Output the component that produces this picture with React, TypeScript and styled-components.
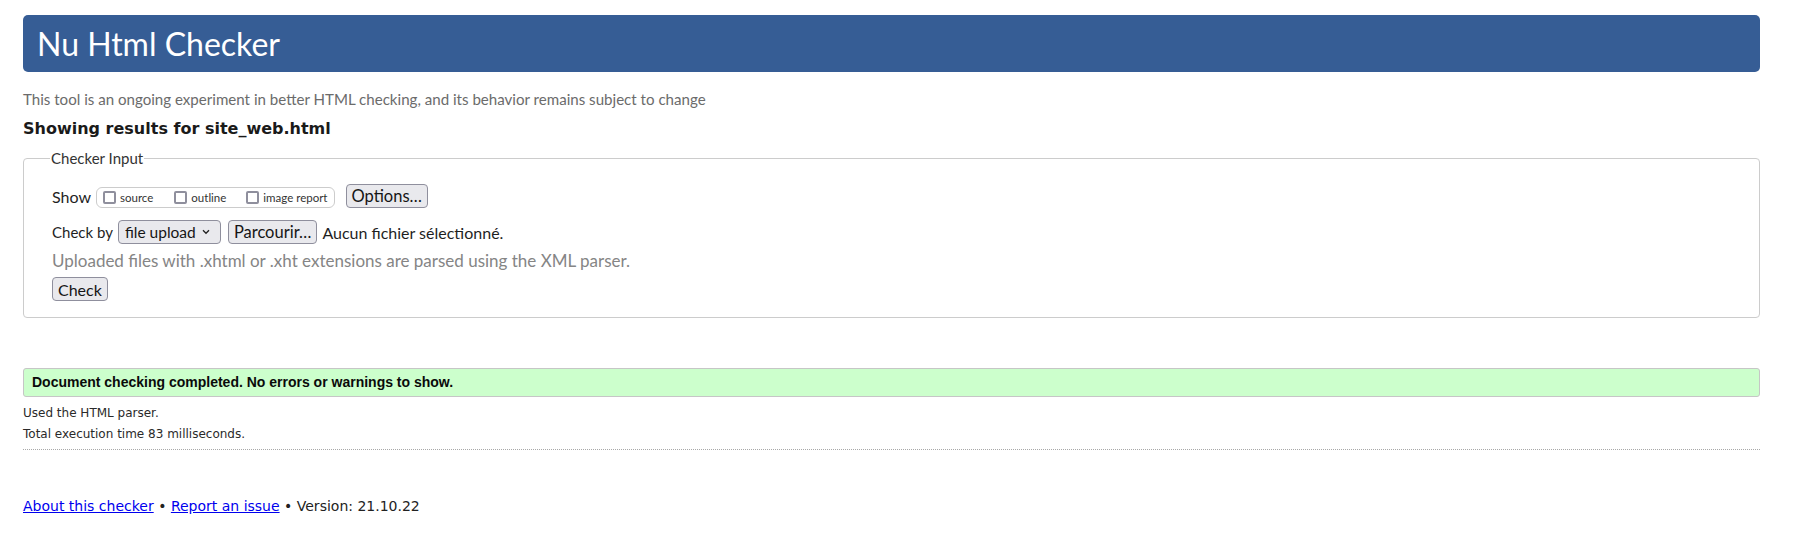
import React from "react";
import styled, { createGlobalStyle } from "styled-components";

const GlobalStyle = createGlobalStyle`
  html, body {
    margin: 0;
    padding: 0;
    background: #ffffff;
  }
  body {
    font-family: "Lato", "Noto Sans", sans-serif;
    color: #222222;
  }
`;

const Page = styled.div`
  padding: 15px 40px 40px 23px;
`;

const Banner = styled.h1`
  margin: 0;
  height: 57px;
  display: flex;
  align-items: center;
  padding: 0 14px;
  background: #365d95;
  color: #ffffff;
  border-radius: 5px;
  font-family: "Lato", "Noto Sans", sans-serif;
  font-weight: 400;
  font-size: 32px;
`;

const Intro = styled.p`
  margin: 17px 0 0;
  font-size: 15.1px;
  line-height: 20px;
  color: #6b6b6b;
`;

const ResultsFor = styled.h2`
  margin: 10px 0 0;
  font-family: "DejaVu Sans", sans-serif;
  font-weight: 700;
  font-size: 16px;
  line-height: 20px;
  color: #1a1a1a;
`;

const Fieldset = styled.fieldset`
  margin: 11px 0 0;
  padding: 17px 28px 16px 28px;
  border: 1px solid #cccccc;
  border-radius: 4px;
  min-width: 0;
`;

const Legend = styled.legend`
  margin-left: -2px;
  padding: 0 1px;
  font-size: 15px;
  line-height: 17px;
  color: #333333;
`;

const Row = styled.div<{ $top?: number }>`
  display: flex;
  align-items: center;
  height: 24px;
  margin-top: ${(p) => p.$top ?? 0}px;
  font-size: 16px;
  color: #1f1f1f;
`;

const Label = styled.span<{ $size?: number }>`
  margin-right: 5px;
  font-size: ${(p) => p.$size ?? 16}px;
`;

const ShowGroup = styled.span`
  display: inline-flex;
  align-items: center;
  height: 19px;
  margin-top: 3px;
  padding: 0 6px 0 6px;
  border: 1px solid #cccccc;
  border-radius: 6px;
  margin-right: 11px;
`;

const CheckItem = styled.label<{ $gap?: number }>`
  display: inline-flex;
  align-items: center;
  margin-right: ${(p) => p.$gap ?? 0}px;
  font-size: 11.5px;
  color: #333333;
`;

const Box = styled.input`
  appearance: none;
  box-sizing: border-box;
  width: 13px;
  height: 13px;
  margin: 0 4px 0 0;
  border: 2px solid #8f8f9d;
  border-radius: 2px;
  background: #ffffff;
`;

const Button = styled.button<{ $size?: number }>`
  box-sizing: border-box;
  height: 24px;
  padding: 0 5px;
  font-family: "Lato", "Noto Sans", sans-serif;
  font-size: ${(p) => p.$size ?? 16.5}px;
  color: #151515;
  background: #e9e9ed;
  border: 1px solid #8f8f9d;
  border-radius: 4px;
`;

const SelectWrap = styled.span`
  position: relative;
  display: inline-flex;
  margin-right: 7px;
`;

const Select = styled.select`
  appearance: none;
  box-sizing: border-box;
  width: 103px;
  height: 24px;
  padding: 0 18px 0 6px;
  font-family: "Lato", "Noto Sans", sans-serif;
  font-size: 15.5px;
  color: #151515;
  background: #e9e9ed;
  border: 1px solid #8f8f9d;
  border-radius: 4px;
`;

const Chevron = styled.svg`
  position: absolute;
  right: 11px;
  top: 9px;
  pointer-events: none;
`;

const FileName = styled.span`
  margin-left: 5px;
`;

const Note = styled.div`
  margin-top: 7px;
  font-size: 17px;
  line-height: 20px;
  color: #858585;
`;

const Success = styled.div`
  margin-top: 50px;
  padding: 0 8px;
  line-height: 27px;
  background: #ccffcc;
  border: 1px solid #c6c6c6;
  border-radius: 3px;
  font-family: "Liberation Sans", Arial, sans-serif;
  font-weight: 700;
  font-size: 14px;
  color: #0a0a0a;
`;

const Details = styled.div`
  margin-top: 6px;
  padding-bottom: 4px;
  border-bottom: 1px dotted #a8a8a8;
  font-family: "DejaVu Sans", sans-serif;
  font-size: 12px;
  line-height: 21px;
  color: #2a2a2a;
`;

const Footer = styled.p`
  margin: 46px 0 0;
  font-family: "DejaVu Sans", sans-serif;
  font-size: 14px;
  line-height: 20px;
  color: #222222;
`;

const Link = styled.a`
  color: #0000ee;
  text-decoration: underline;
`;

export default function App() {
  return (
    <>
      <GlobalStyle />
      <Page>
        <Banner>Nu Html Checker</Banner>
        <Intro>
          This tool is an ongoing experiment in better HTML checking, and its behavior remains
          subject to change
        </Intro>
        <ResultsFor>Showing results for site_web.html</ResultsFor>

        <Fieldset>
          <Legend>Checker Input</Legend>
          <Row>
            <Label>Show</Label>
            <ShowGroup>
              <CheckItem $gap={21}>
                <Box type="checkbox" />
                source
              </CheckItem>
              <CheckItem $gap={20}>
                <Box type="checkbox" />
                outline
              </CheckItem>
              <CheckItem>
                <Box type="checkbox" />
                image report
              </CheckItem>
            </ShowGroup>
            <Button type="button">Options…</Button>
          </Row>
          <Row $top={12}>
            <Label $size={15}>Check by</Label>
            <SelectWrap>
              <Select defaultValue="file">
                <option value="file">file upload</option>
                <option value="address">address</option>
                <option value="text">text input</option>
              </Select>
              <Chevron width="8" height="6" viewBox="0 0 8 6">
                <path d="M1 1.2 L4 4.3 L7 1.2" fill="none" stroke="#222" strokeWidth="1.3" />
              </Chevron>
            </SelectWrap>
            <Button type="button">Parcourir…</Button>
            <FileName>Aucun fichier sélectionné.</FileName>
          </Row>
          <Note>Uploaded files with .xhtml or .xht extensions are parsed using the XML parser.</Note>
          <Row $top={6}>
            <Button type="submit" $size={16}>
              Check
            </Button>
          </Row>
        </Fieldset>

        <Success>Document checking completed. No errors or warnings to show.</Success>
        <Details>
          <div>Used the HTML parser.</div>
          <div>Total execution time 83 milliseconds.</div>
        </Details>

        <Footer>
          <Link href="#about">About this checker</Link> • <Link href="#issue">Report an issue</Link> •
          Version: 21.10.22
        </Footer>
      </Page>
    </>
  );
}
